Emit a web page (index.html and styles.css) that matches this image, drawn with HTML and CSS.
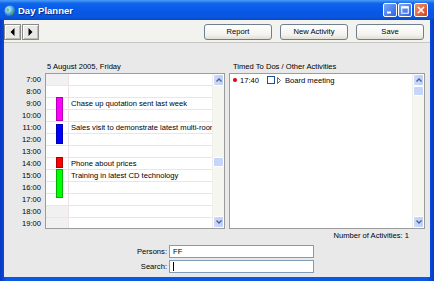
FILE: index.html
```html
<!DOCTYPE html>
<html lang="en">
<head>
  <meta charset="UTF-8" />
  <title>Day Planner</title>
  <link rel="stylesheet" href="styles.css">
</head>
<body>
<div class="window">
  <div class="titlebar">
    <svg class="app-icon" viewBox="0 0 12 12">
      <defs>
        <radialGradient id="globe" cx="0.35" cy="0.35" r="0.7">
          <stop offset="0" stop-color="#d8f4ff"/>
          <stop offset="0.5" stop-color="#5ab4f0"/>
          <stop offset="1" stop-color="#14589e"/>
        </radialGradient>
      </defs>
      <circle cx="6" cy="6" r="5.5" fill="url(#globe)"/>
      <path d="M3 3.5 C4.5 3 5.5 4 5 5.5 C4.4 6.8 3.2 6.5 2.6 5.2 Z M7 7 C8.5 6.5 9.8 7.5 9 9 C8.2 10 6.8 9.5 7 7 Z" fill="#5fae4a" opacity="0.8"/>
    </svg>
    <span class="title">Day Planner</span>
    <div class="caption-btns">
      <span class="cap-btn"><svg width="8" height="8" viewBox="0 0 8 8"><rect x="1" y="5.5" width="4" height="2" fill="#fff"/></svg></span>
      <span class="cap-btn"><svg width="8" height="8" viewBox="0 0 8 8"><rect x="0.75" y="0.75" width="6.5" height="6.5" fill="none" stroke="#fff" stroke-width="1"/><rect x="0.5" y="0.5" width="7" height="2" fill="#fff"/></svg></span>
      <span class="cap-btn close"><svg width="8" height="8" viewBox="0 0 8 8"><path d="M1 1 L7 7 M7 1 L1 7" stroke="#fff" stroke-width="1.6"/></svg></span>
    </div>
  </div>

  <div class="client">
    <div class="toolbar">
      <div class="nav">
        <button class="nav-btn"><svg width="5" height="8" viewBox="0 0 5 8"><polygon points="4.5,0 4.5,8 0.5,4" fill="#000"/></svg></button>
        <button class="nav-btn"><svg width="5" height="8" viewBox="0 0 5 8"><polygon points="0.5,0 0.5,8 4.5,4" fill="#000"/></svg></button>
      </div>
      <div class="actions">
        <button class="btn">Report</button>
        <button class="btn">New Activity</button>
        <button class="btn">Save</button>
      </div>
    </div>

    <div class="panes">
      <div class="day-pane">
        <div class="pane-label">5 August 2005, Friday</div>
        <div class="times">
          <div>7:00</div><div>8:00</div><div>9:00</div><div>10:00</div><div>11:00</div>
          <div>12:00</div><div>13:00</div><div>14:00</div><div>15:00</div><div>16:00</div>
          <div>17:00</div><div>18:00</div><div>19:00</div>
        </div>
        <div class="listbox cal">
          <div class="cal-grid">
            <div class="slot off"><span class="mark"></span><span class="text"></span></div>
            <div class="slot"><span class="mark"></span><span class="text"></span></div>
            <div class="slot"><span class="mark"></span><span class="text">Chase up quotation sent last week</span></div>
            <div class="slot"><span class="mark"></span><span class="text"></span></div>
            <div class="slot"><span class="mark"></span><span class="text">Sales visit to demonstrate latest multi-room system</span></div>
            <div class="slot"><span class="mark"></span><span class="text"></span></div>
            <div class="slot"><span class="mark"></span><span class="text"></span></div>
            <div class="slot"><span class="mark"></span><span class="text">Phone about prices</span></div>
            <div class="slot"><span class="mark"></span><span class="text">Training in latest CD technology</span></div>
            <div class="slot"><span class="mark"></span><span class="text"></span></div>
            <div class="slot"><span class="mark"></span><span class="text"></span></div>
            <div class="slot off"><span class="mark"></span><span class="text"></span></div>
            <div class="slot off"><span class="mark"></span><span class="text"></span></div>

            <span class="bar magenta" style="top: 23px; height: 24px;"></span>
            <span class="bar blue" style="top: 50px; height: 20px;"></span>
            <span class="bar red" style="top: 83px; height: 11px;"></span>
            <span class="bar green" style="top: 95px; height: 29px;"></span>
          </div>
          <div class="vscroll">
            <span class="sb-btn"><svg width="6" height="4" viewBox="0 0 6 4"><path d="M0.5 3.5 L3 1 L5.5 3.5" fill="none" stroke="#4d6185" stroke-width="1.3"/></svg></span>
            <div class="sb-track"><span class="sb-thumb" style="margin-top: 71px;"></span></div>
            <span class="sb-btn"><svg width="6" height="4" viewBox="0 0 6 4"><path d="M0.5 0.5 L3 3 L5.5 0.5" fill="none" stroke="#4d6185" stroke-width="1.3"/></svg></span>
          </div>
        </div>
      </div>

      <div class="todo-pane">
        <div class="pane-label">Timed To Dos / Other Activities</div>
        <div class="listbox todo">
          <div class="todo-list">
            <div class="todo-row">
              <span class="dot"></span>
              <span class="time">17:40</span>
              <span class="check"></span>
              <svg class="arrow" width="4" height="7" viewBox="0 0 4 7"><polygon points="0.5,0.5 3.5,3.5 0.5,6.5" fill="#fff" stroke="#555" stroke-width="0.9"/></svg>
              <span>Board meeting</span>
            </div>
          </div>
          <div class="vscroll">
            <span class="sb-btn"><svg width="6" height="4" viewBox="0 0 6 4"><path d="M0.5 3.5 L3 1 L5.5 3.5" fill="none" stroke="#4d6185" stroke-width="1.3"/></svg></span>
            <div class="sb-track"><span class="sb-thumb"></span></div>
            <span class="sb-btn"><svg width="6" height="4" viewBox="0 0 6 4"><path d="M0.5 0.5 L3 3 L5.5 0.5" fill="none" stroke="#4d6185" stroke-width="1.3"/></svg></span>
          </div>
        </div>
      </div>
    </div>

    <div class="count">Number of Activities: 1</div>

    <div class="filters">
      <label>Persons:</label>
      <div class="field">FF</div>
      <label>Search:</label>
      <div class="field"><span class="caret"></span></div>
    </div>
  </div>
</div>
</body>
</html>
```

FILE: styles.css
```css
* {
  box-sizing: border-box;
}
body {
  margin: 0;
  font-family: "Liberation Sans", Arial, sans-serif;
  font-size: 7.6px;
  color: #000;
}
.window {
  width: 434px;
  height: 281px;
  display: flex;
  flex-direction: column;
  background: linear-gradient(90deg, #0837c4, #0a58e4 1.5%, #0a58e4 98.5%, #0837c4);
  overflow: hidden;
}

/* title bar */
.titlebar {
  height: 20px;
  display: flex;
  align-items: center;
  padding: 0 6px 0 4px;
  background: linear-gradient(#4b9cf8, #0d64eb 18%, #0758e6 60%, #0a57df 85%, #0648cc);
  color: #fff;
}
.app-icon {
  width: 12px;
  height: 12px;
  margin-top: 1px;
}
.title {
  margin-left: 2px;
  font-size: 9.5px;
  font-weight: bold;
  text-shadow: 1px 1px 0 #0a2c8c;
}
.caption-btns {
  margin-left: auto;
  display: flex;
  gap: 1px;
}
.cap-btn {
  width: 14px;
  height: 14px;
  border: 1px solid #fff;
  border-radius: 2px;
  background: linear-gradient(135deg, #78a8fa, #2a62e6);
  display: flex;
  align-items: center;
  justify-content: center;
}
.cap-btn.close {
  margin-left: 1px;
  background: linear-gradient(135deg, #f09070, #d5441c);
}

/* client area */
.client {
  flex: 1;
  margin: 0 4px 4px;
  background: #e9e9e9;
  display: flex;
  flex-direction: column;
}
.toolbar {
  height: 23px;
  display: flex;
  align-items: center;
  padding: 1px 6px 0 0;
  background: #f2f2ef;
  border-bottom: 1px solid #c7c7c2;
}
.nav {
  display: flex;
  gap: 1px;
}
.nav-btn {
  width: 17px;
  height: 16px;
  padding: 0;
  border: 1px solid #8a8a8a;
  background: #e9e9e6;
  box-shadow: inset 1px 1px 0 #fff, inset -1px -1px 0 #bdbdb8;
  display: flex;
  align-items: center;
  justify-content: center;
}
.actions {
  margin-left: auto;
  display: flex;
  gap: 8px;
}
.btn {
  width: 68px;
  height: 16px;
  padding: 0;
  font: inherit;
  color: #000;
  border: 1px solid #6f7f90;
  border-radius: 3px;
  background: linear-gradient(#ffffff, #f3f2ee 70%, #e0ded6);
}

/* panes */
.panes {
  display: flex;
  gap: 4px;
  padding-top: 18px;
}
.pane-label {
  height: 12px;
  line-height: 12px;
  white-space: nowrap;
}
.day-pane {
  display: grid;
  grid-template-columns: 41px 180px;
}
.day-pane .pane-label {
  grid-column: 2;
  padding-left: 2px;
}
.times {
  padding-top: 1px;
}
.times div {
  height: 12px;
  line-height: 11px;
  text-align: right;
  padding-right: 4px;
}
.listbox {
  height: 156px;
  display: flex;
  border: 1px solid #9c9c9c;
  background: #fff;
}
.cal-grid {
  flex: 1;
  position: relative;
  overflow: hidden;
}
.slot {
  display: flex;
  height: 12px;
  border-bottom: 1px solid #f1e3e3;
}
.slot .mark {
  width: 23px;
  border-right: 1px solid #eee2e2;
}
.slot.off .mark {
  background: #f1f1f1;
}
.slot .text {
  flex: 1;
  padding-left: 2px;
  line-height: 11px;
  white-space: nowrap;
  overflow: hidden;
}
.bar {
  position: absolute;
  left: 10px;
  width: 7px;
  border: 1px solid rgba(0, 0, 0, 0.3);
}
.magenta { background: #ff00ff; }
.blue { background: #0000ff; }
.red { background: #ff0000; }
.green { background: #00ff00; }

/* scrollbars */
.vscroll {
  width: 12px;
  display: flex;
  flex-direction: column;
  background: #f6f6f1;
  border-left: 1px solid #efefe9;
}
.sb-btn {
  height: 12px;
  border: 1px solid #fff;
  border-radius: 2px;
  background: linear-gradient(90deg, #cddafc, #bccff9);
  display: flex;
  align-items: center;
  justify-content: center;
}
.sb-track {
  flex: 1;
}
.sb-thumb {
  display: block;
  height: 10px;
  border: 1px solid #fff;
  border-radius: 2px;
  background: #c6d5fb;
}

/* todo list */
.todo {
  width: 196px;
}
.todo-pane .pane-label {
  padding-left: 4px;
}
.todo-list {
  flex: 1;
}
.todo-row {
  display: flex;
  align-items: center;
  height: 12px;
  padding-left: 3px;
  white-space: nowrap;
}
.dot {
  width: 4px;
  height: 4px;
  border-radius: 50%;
  background: #e00000;
}
.time {
  margin-left: 3px;
  width: 27px;
}
.check {
  width: 8px;
  height: 8px;
  border: 1px solid #1f4f9a;
  background: #fff;
}
.arrow {
  margin: 0 4px 0 2px;
}

/* bottom */
.count {
  height: 12px;
  line-height: 12px;
  text-align: right;
  padding-right: 21px;
}
.filters {
  display: grid;
  grid-template-columns: 163px 145px;
  column-gap: 2px;
  row-gap: 2px;
  margin-top: 3px;
}
.filters label {
  text-align: right;
  line-height: 13px;
}
.field {
  height: 13px;
  border: 1px solid #7f9db9;
  background: #fff;
  padding-left: 3px;
  line-height: 11px;
}
.caret {
  display: inline-block;
  width: 1px;
  height: 9px;
  margin-top: 1px;
  background: #000;
  vertical-align: top;
}
```
